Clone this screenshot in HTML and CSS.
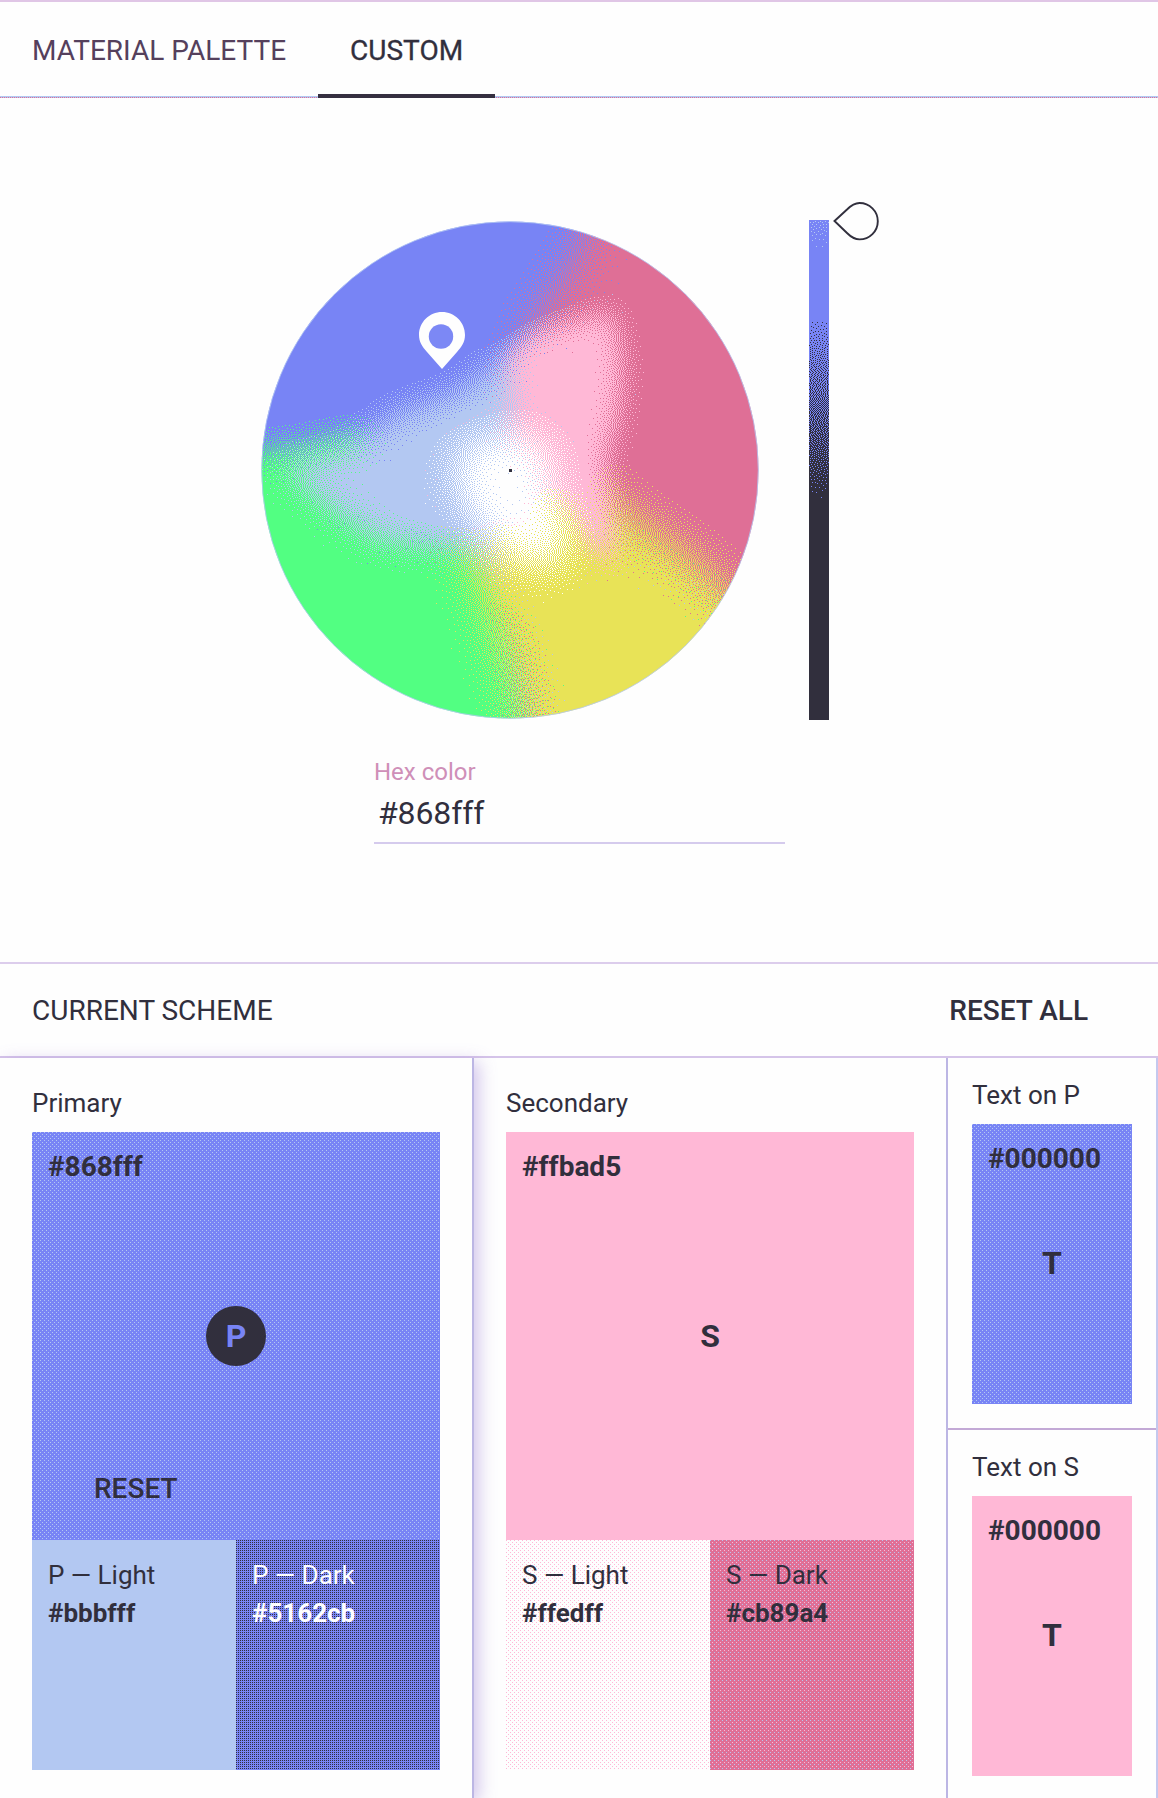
FILE: index.html
```html
<!DOCTYPE html>
<html lang="en">
<head>
<meta charset="utf-8">
<title>Color tool</title>
<link rel="stylesheet" href="styles.css">
</head>
<body>
<nav class="tabs">
  <button class="tab"><span class="tab-text tab-material">MATERIAL PALETTE</span></button>
  <button class="tab active"><span class="tab-text">CUSTOM</span></button>
</nav>

<section class="picker">
  <div class="controls">
    <div class="wheel">
      <canvas id="wheel" width="498" height="498"></canvas>
      <svg class="pin" width="48" height="60" viewBox="0 0 48 60">
        <path d="M24 1C11.300 1 1 11.300 1 24C1 31 4.500 36 9 41L24 58L39 41C43.500 36 47 31 47 24C47 11.300 36.700 1 24 1Z" fill="#fefefe"/>
        <circle cx="23" cy="25.500" r="12.200" fill="#7c88f5"/>
      </svg>
      <span class="center-dot"></span>
    </div>
    <canvas id="shade" width="20" height="500"></canvas>
    <svg class="handle" width="46" height="40" viewBox="0 0 46 40">
      <path d="M1.500 19L14 7.500C18 3.500 22 1 26.500 1A18.300 18.200 0 0 1 26.500 37.400C22 37.400 18 35 14 31Z" fill="#fefefe" stroke="#312f3d" stroke-width="1.900"/>
    </svg>
  </div>
  <div class="hex-field">
    <div class="hex-label">Hex color</div>
    <div class="hex-value">#868fff</div>
  </div>
</section>

<header class="scheme-head">
  <div>CURRENT SCHEME</div>
  <div class="reset-all">RESET ALL</div>
</header>

<main class="scheme">
  <section class="column primary">
    <div class="label">Primary</div>
    <div class="swatch p-fill">
      <div class="hex">#868fff</div>
      <div class="letter badge">P</div>
      <div class="reset">RESET</div>
    </div>
    <div class="variants">
      <div class="variant p-light"><div>P — Light</div><b>#bbbfff</b></div>
      <div class="variant p-dark"><div>P — Dark</div><b>#5162cb</b></div>
    </div>
  </section>
  <section class="column">
    <div class="label">Secondary</div>
    <div class="swatch s-fill">
      <div class="hex">#ffbad5</div>
      <div class="letter">S</div>
    </div>
    <div class="variants">
      <div class="variant s-light"><div>S — Light</div><b>#ffedff</b></div>
      <div class="variant s-dark"><div>S — Dark</div><b>#cb89a4</b></div>
    </div>
  </section>
  <section class="texts">
    <div class="text-card">
      <div class="label">Text on P</div>
      <div class="text-swatch p-fill"><div class="hex">#000000</div><div class="letter">T</div></div>
    </div>
    <div class="text-card">
      <div class="label">Text on S</div>
      <div class="text-swatch s-fill"><div class="hex">#000000</div><div class="letter">T</div></div>
    </div>
  </section>
</main>
<script src="wheel.js"></script>
</body>
</html>
```
FILE: styles.css
```css
* { box-sizing: border-box; }
body {
  margin: 0;
  width: 1158px;
  height: 1798px;
  overflow: hidden;
  background: #fefefe;
  color: #312f3d;
  font-family: Roboto, sans-serif;
  font-size: 26px;
  line-height: 30px;
}
canvas, svg { display: block; }

.tabs {
  display: flex;
  height: 98px;
  border-top: 2px solid #e0c6e6;
  background: linear-gradient(#b3c8f2, #b3c8f2) 0 94px / 100% 1px no-repeat,
    repeating-linear-gradient(90deg, #df6f96 0 1px, #b3c8f2 1px 2px) 0 95px / 100% 1px no-repeat;
}
.tab {
  margin: 0;
  padding: 0 32px;
  border: 0;
  border-bottom: 4px solid transparent;
  background: none;
  font: 400 28px/32px Roboto, sans-serif;
  color: #55405c;
}
.tab-text { display: block; padding-top: 6px; }
.tab.active { width: 177px; color: #312f3d; border-bottom-color: #352f40; -webkit-text-stroke: 0.3px #312f3d; }

.picker { height: 864px; padding-top: 104px; }
.controls { display: flex; padding-left: 261px; height: 518px; }
.wheel { position: relative; width: 498px; height: 498px; margin: 19px 50px 0 0; }
#shade { margin: 18px 4px 0 0; }
.pin { position: absolute; left: 157px; top: 90px; }
.center-dot { position: absolute; left: 248px; top: 248px; width: 3px; height: 3px; background: #312f3d; }
.hex-field {
  width: 411px;
  margin: 36px 0 0 374px;
  height: 88px;
  border-bottom: 2px solid #d5cbed;
}
.hex-label { color: #cf8fb8; font-size: 24px; line-height: 32px; }
.hex-value { font-size: 32px; line-height: 38px; padding: 6px 0 0 4px; letter-spacing: -0.1px; }

.scheme-head {
  display: flex;
  justify-content: space-between;
  height: 96px;
  padding: 29px 70px 0 32px;
  border-top: 2px solid #dccdec;
  border-bottom: 2px solid #d5c4e9;
  font-size: 28px;
  line-height: 36px;
}
.reset-all { font-weight: 500; }

.scheme { display: flex; height: 740px; }
.column {
  width: 474px;
  padding: 29px 32px 0;
  border-right: 2px solid #bcb6e4;
}
.primary {
  position: relative;
  background: #fefefe;
  box-shadow: 5px 4px 16px rgba(150, 120, 210, .42);
}
.label { height: 45px; line-height: 33px; }
.swatch { position: relative; height: 408px; padding: 16px; }
.hex { font-size: 28px; font-weight: 700; line-height: 37px; }
.letter {
  position: absolute;
  left: 50%;
  top: 50%;
  width: 60px;
  height: 60px;
  margin: -30px 0 0 -30px;
  font-size: 32px;
  font-weight: 700;
  line-height: 60px;
  text-align: center;
}
.text-swatch .letter { margin-top: -31px; }
.badge { background: #312f3d; border-radius: 50%; color: #7884f5; }
.reset { position: absolute; left: 62px; bottom: 33px; font-size: 28px; line-height: 36px; font-weight: 500; }
.variants { display: flex; }
.variant { width: 204px; height: 230px; padding: 16px; line-height: 38px; }
.variant b { display: block; }

.p-fill {
  background: conic-gradient(from 0deg at 1px 1px, transparent 75%, #b3c8f2 0) 0 0 / 4px 4px,
    conic-gradient(from 0deg at 1px 1px, transparent 75%, #b3c8f2 0) 2px 2px / 4px 4px,
    #7884f5;
}
.s-fill { background: #ffb8d6; }
.p-light { background: #b3c8f2; }
.p-dark {
  color: #fefefe;
  background: conic-gradient(from 0deg at 1px 1px, transparent 75%, #312f3d 0) 0 0 / 2px 2px, #7884f5;
}
.s-light {
  background: conic-gradient(from 0deg at 1px 1px, transparent 75%, #ffb8d6 0) 0 0 / 4px 4px,
    conic-gradient(from 0deg at 1px 1px, transparent 75%, #ffb8d6 0) 2px 2px / 4px 4px, #fefefe;
}
.s-dark {
  background: conic-gradient(from 0deg at 1px 1px, transparent 75%, #b3c8f2 0) 0 0 / 4px 4px,
    conic-gradient(from 0deg at 1px 1px, transparent 75%, #ffb8d6 0) 2px 2px / 4px 4px, #df6f96;
}

.texts { width: 210px; border-right: 2px solid #c4c8ee; }
.text-card { height: 372px; padding: 21px 24px 0; border-bottom: 2px solid #c3a9d6; }
.text-card + .text-card { border-bottom: 0; }
.text-swatch { position: relative; width: 160px; height: 280px; padding: 16px; }
```
FILE: wheel.js
```js
// Limited palette used by the wheel and the shade bar.
const PALETTE = [
  [254, 254, 254], [179, 200, 242], [120, 132, 245], [223, 111, 150],
  [255, 184, 214], [82, 255, 130], [232, 227, 87]
];

// Serpentine error diffusion to the given palette.
function dither(ctx, w, h, palette) {
  const img = ctx.getImageData(0, 0, w, h);
  const buf = Float32Array.from(img.data);
  for (let y = 0; y < h; y++) {
    const dir = y % 2 ? -1 : 1;
    for (let n = 0; n < w; n++) {
      const x = dir > 0 ? n : w - 1 - n;
      const i = (y * w + x) * 4;
      let best = palette[0], bd = Infinity;
      for (const p of palette) {
        const d = (buf[i] - p[0]) ** 2 + (buf[i + 1] - p[1]) ** 2 + (buf[i + 2] - p[2]) ** 2;
        if (d < bd) { bd = d; best = p; }
      }
      for (let c = 0; c < 3; c++) {
        const e = buf[i + c] - best[c];
        img.data[i + c] = best[c];
        const add = (dx, dy, k) => {
          const xx = x + dx, yy = y + dy;
          if (xx >= 0 && xx < w && yy < h) buf[(yy * w + xx) * 4 + c] += e * k;
        };
        add(dir, 0, 7 / 16);
        add(-dir, 1, 3 / 16);
        add(0, 1, 5 / 16);
        add(dir, 1, 1 / 16);
      }
    }
  }
  ctx.putImageData(img, 0, 0);
}

const wheel = document.getElementById('wheel');
const field = document.createElement('canvas');
field.width = field.height = 498;
const f = field.getContext('2d', { willReadFrequently: true });
f.fillStyle = '#7884f5';
f.fillRect(0, 0, 498, 498);

function shape(color, blur, pts) {
  f.filter = `blur(${blur}px)`;
  f.fillStyle = color;
  f.beginPath();
  pts.forEach(([x, y]) => f.lineTo((x - 61) / 2.9037, (y - 90) / 2.9037));
  f.closePath();
  f.fill();
}
shape('#df6f96', 20, [[1060, -100], [985, 180], [910, 300], [840, 400], [850, 900], [1500, 1300], [1800, 900], [1700, -100]]);
shape('#52ff82', 15, [[-100, 765], [160, 750], [340, 710], [560, 980], [760, 950], [860, 1700], [-100, 1700]]);
shape('#e8e357', 22, [[640, 970], [850, 850], [1010, 850], [1130, 950], [1260, 1030], [1390, 1140], [1600, 1330], [1600, 1900], [860, 1900], [810, 1500], [735, 1250], [670, 1080]]);
shape('#b3c8f2', 16, [[110, 800], [300, 760], [450, 650], [640, 585], [730, 510], [920, 430], [930, 800], [790, 1130], [700, 1040], [560, 1035], [400, 1020], [240, 910]]);
shape('#ffb8d6', 13, [[780, 480], [870, 410], [980, 375], [1085, 355], [1110, 500], [1100, 640], [1060, 800], [1090, 1090], [960, 1000], [850, 850], [780, 720], [790, 600]]);
shape('#e8e357', 13, [[740, 1010], [860, 890], [960, 930], [1000, 1040], [970, 1200], [770, 1200]]);
shape('#fefefe', 19, [[620, 760], [720, 710], [850, 705], [920, 790], [905, 870], [960, 960], [940, 1090], [800, 1090], [700, 990], [635, 900]]);
f.filter = 'none';
dither(f, 498, 498, PALETTE);

const g = wheel.getContext('2d');
g.save();
g.beginPath();
g.arc(249, 249, 248.5, 0, Math.PI * 2);
g.clip();
g.drawImage(field, 0, 0);
g.restore();
g.strokeStyle = 'rgba(179,200,242,.8)';
g.lineWidth = 1;
g.beginPath();
g.arc(249, 249, 248.3, 0, Math.PI * 2);
g.stroke();

const s = document.getElementById('shade').getContext('2d', { willReadFrequently: true });
const grad = s.createLinearGradient(0, 0, 0, 500);
grad.addColorStop(0, '#828eff');
grad.addColorStop(0.06, '#7884f5');
grad.addColorStop(0.18, '#7884f5');
grad.addColorStop(0.56, '#312f3d');
grad.addColorStop(1, '#312f3d');
s.fillStyle = grad;
s.fillRect(0, 0, 20, 500);
dither(s, 20, 500, [[179, 200, 242], [120, 132, 245], [49, 47, 61]]);
```
